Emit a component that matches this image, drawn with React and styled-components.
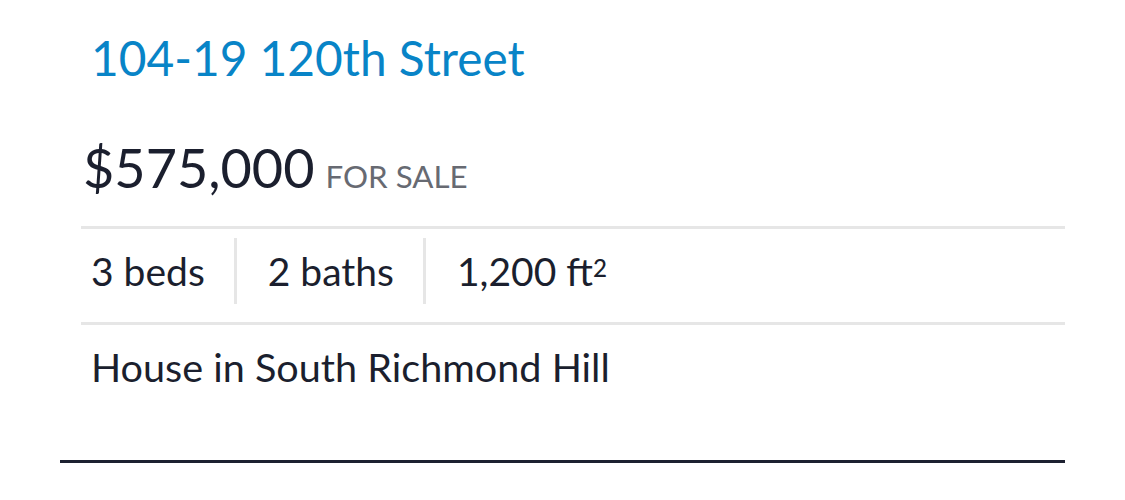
import React from "react";
import styled, { createGlobalStyle } from "styled-components";

const Global = createGlobalStyle`
  html, body { margin: 0; padding: 0; background: #fff; }
  body { font-family: "Lato", "Noto Sans", sans-serif; color: #1b1f2e; }
`;

const Card = styled.div`
  margin-left: 60px;
  width: 1005px;
  border-bottom: 3px solid #1d2131;
`;

const Body = styled.div`
  padding-left: 21px;
  height: 460px;
  box-sizing: border-box;
  padding-top: 24px;
`;

const Title = styled.a`
  display: block;
  padding-left: 10px;
  font-size: 47.8px;
  line-height: 68px;
  color: #0884c7;
  text-decoration: none;
`;

const PriceRow = styled.div`
  display: flex;
  align-items: baseline;
  gap: 11px;
  padding-left: 2px;
  margin-top: 44px;
  height: 90px;
`;

const Price = styled.span`
  font-size: 54px;
  line-height: 64px;
  color: #1b1f2e;
`;

const Status = styled.span`
  font-size: 31.3px;
  color: #676a72;
  text-transform: uppercase;
`;

const Stats = styled.div`
  display: flex;
  border-top: 3px solid #e6e6e6;
  border-bottom: 3px solid #e6e6e6;
  height: 93px;
`;

const Stat = styled.div`
  display: flex;
  align-items: center;
  padding: 0 29px 0 31px;
  margin: 9px 0 18px;
  font-size: 39px;
  border-left: 3px solid #e6e6e6;
  &:first-child { border-left: none; padding-left: 10px; }
  sup { font-size: 0.62em; font-weight: 500; line-height: 1; position: relative; top: -0.14em; margin-left: 0; }
`;

const Kind = styled.div`
  padding-left: 10px;
  font-size: 39.6px;
  line-height: 84px;
`;

export default function App() {
  return (
    <>
      <Global />
      <Card>
        <Body>
          <Title href="#">104-19 120th Street</Title>
          <PriceRow>
            <Price>$575,000</Price>
            <Status>For Sale</Status>
          </PriceRow>
          <Stats>
            <Stat>3 beds</Stat>
            <Stat>2 baths</Stat>
            <Stat>1,200 ft<sup>2</sup></Stat>
          </Stats>
          <Kind>House in South Richmond Hill</Kind>
        </Body>
      </Card>
    </>
  );
}
